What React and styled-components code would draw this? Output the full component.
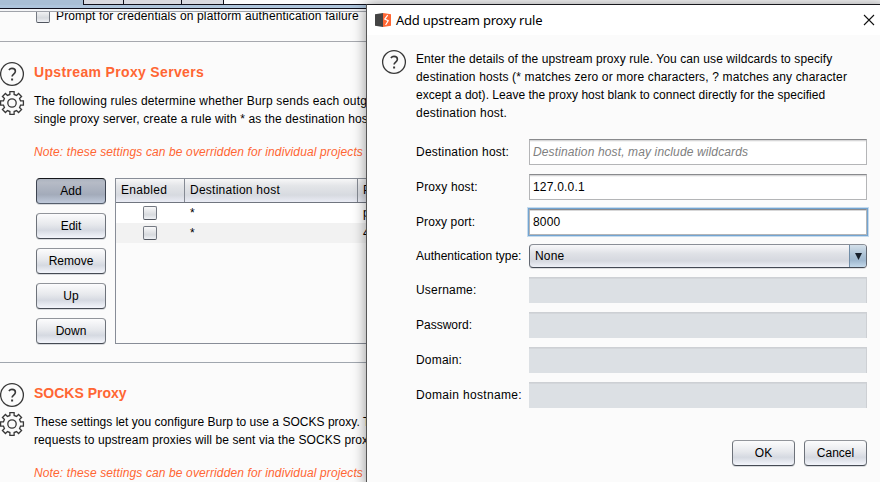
import React from "react";
import styled, { createGlobalStyle, css } from "styled-components";

const Global = createGlobalStyle`
  * { box-sizing: border-box; }
  html, body { margin: 0; padding: 0; overflow: hidden; }
  body { font-family: "Liberation Sans", Arial, sans-serif; font-size: 12px; color: #000; background: #fbfbfb; }
`;
const Screen = styled.div`
  position: relative; width: 880px; height: 482px; overflow: hidden; background: #fbfbfb;
`;
const TabStrip = styled.div`
  height: 12px; display: flex; flex-direction: column; background: #f4f5f7; border-bottom: 1px solid #a0a3aa;
`;
const Tabs = styled.div`
  height: 5px; display: flex; padding-left: 83px; background: #a9bfd5;
`;
const Tab = styled.div`
  width: ${(p) => p.$w}px; background: #d9dae1; border-left: 1px solid #10101c; border-bottom: 1px solid #10101c;
`;
const TabRest = styled(Tab)`flex: 1; background: #fcfcfd;`;
const TabLine = styled.div`
  height: 4px; background: #aec5dc; border-bottom: 1px solid #10101c;
`;
const Main = styled.main`display: flex; flex-direction: column;`;
const Top = styled.div`
  height: 30px; border-bottom: 1px solid #a6a8ae; display: flex; align-items: flex-start;
  padding-left: 36px; gap: 6px; overflow: hidden;
`;
const Check = styled.span`
  display: block; width: 14px; height: 14px; border-radius: 2px; border: 1px solid #747982; border-bottom-color: #50555e;
  background: linear-gradient(#f9f9fa, #d7dade 65%, #eff1f5); flex: none;
`;
const TopCheck = styled(Check)`margin-top: -3px;`;
const Line = styled.div`
  white-space: pre; height: 18px; line-height: 18px; letter-spacing: ${(p) => p.$ls || 0}px;
`;
const TopLine = styled(Line)`margin-top: -5px;`;
const Section = styled.section`
  display: flex; height: ${(p) => p.$h || "auto"}; border-bottom: 1px solid #a0a6ae; padding-top: ${(p) => p.$pt}px;
`;
const IconCol = styled.div`
  width: 34px; flex: none; display: flex; flex-direction: column; gap: 3px; margin-top: -2px;
  svg { display: block; margin-left: -1px; }
`;
const Body = styled.div`flex: 1; min-width: 0;`;
const Heading = styled.h2`
  margin: 0 0 11px; font-size: 14px; line-height: 18px; height: 18px; font-weight: bold; color: #ff6633; white-space: nowrap;
  letter-spacing: ${(p) => p.$ls}px;
`;
const Note = styled(Line)`margin-top: 15px; font-style: italic; color: #ff6633;`;
const Rules = styled.div`display: flex; margin: 17px 0 0 2px; gap: 9px;`;
const Buttons = styled.div`display: flex; flex-direction: column; gap: 9px;`;
const Button = styled.button`
  display: block; width: ${(p) => p.$w || 70}px; height: 26px; padding: 0 0 1px; font: inherit; line-height: 22px;
  color: #000; border: 1px solid #6d727a; border-top-color: #92959b; border-bottom-color: #454a53; border-radius: 4px;
  background: linear-gradient(#fcfcfd, #e6e8ec 45%, #d5d9e1 68%, #f3f5fb);
  box-shadow: 0 1px 0 #d8dadd;
  ${(p) => p.$pressed && css`
    border-color: #14161b #3c4350 #555e6c;
    background: linear-gradient(#adb4c0, #b6bbc6 15%, #a3abba 65%, #c0cadb);
  `}
`;
const Table = styled.div`
  flex: 1; height: 166px; border: 1px solid #888d97; display: flex; flex-direction: column;
`;
const cells = css`display: grid; grid-template-columns: 68px 173px 1fr;`;
const HeadRow = styled.div`
  ${cells} height: 24px; border-bottom: 1px solid #70757f;
  background: linear-gradient(#f7f7f8, #e3e5e8 30%, #d7dae0 70%, #eaecf5);
`;
const HeadCell = styled.div`
  padding-left: 5px; line-height: 22px; white-space: nowrap; letter-spacing: ${(p) => p.$ls || 0}px;
  & + & { border-left: 1px solid #858a94; }
`;
const Row = styled.div`${cells} height: 20px; background: ${(p) => (p.$alt ? "#f2f2f2" : "#fff")};`;
const Cell = styled.div`padding-left: 6px; line-height: 20px; overflow: hidden;`;
const CheckCell = styled.div`display: flex; align-items: center; justify-content: center;`;

const Dialog = styled.div`
  position: absolute; left: 366px; top: 4px; width: 520px; height: 484px; background: #fbfbfb;
  border: 1px solid #555; border-top-color: #18181c; box-shadow: 0 0 13px rgba(0,0,0,.42);
`;
const TitleBar = styled.div`
  width: 513px; height: 30px; background: #fff; display: flex; align-items: center; padding: 0 5px 1px 8px;
`;
const Title = styled.div`
  flex: 1; margin-left: 5px; font: 13px "Noto Sans", sans-serif; letter-spacing: -0.23px; line-height: 24px;
`;
const Intro = styled.div`display: flex; padding: 15px 0 0 14px; gap: 9px; svg { display: block; margin-top: -1px; }`;
const Form = styled.div`
  margin: 17px 0 0 49px; width: 451px; display: flex; flex-direction: column; gap: 9px;
`;
const Field = styled.div`display: grid; grid-template-columns: 113px 338px; height: ${(p) => p.$h || 26}px; align-items: center;`;
const Label = styled.label`white-space: nowrap; line-height: 22px; letter-spacing: ${(p) => p.$ls || 0}px;`;
const Input = styled.div`
  height: 26px; background: #fff; border: 1px solid #b4b5b7; border-top-color: #898a8d; padding-left: 3px; line-height: 25px;
  box-shadow: inset 0 1px 0 #d7d7d8, inset 0 2px 0 #f3f3f3; letter-spacing: ${(p) => p.$ls || 0}px; white-space: nowrap;
  ${(p) => p.$hint && css`color: #808080; font-style: italic;`}
  ${(p) => p.$focus && css`box-shadow: 0 0 0 1px #73a4d1, 0 0 0 2px #c5dbee, inset 0 1px 0 #d7d7d8;`}
  ${(p) => p.$off && css`background: #dce0e4; border: 0 solid #cdd0d4; border-width: 1px 1px 0 0; box-shadow: inset 0 1px 0 #d3d6da;`}
`;
const Select = styled.div`
  height: 24px; display: flex; border: 1px solid #626872; border-top-color: #8a8e96; border-bottom-color: #434953; border-radius: 4px;
  background: linear-gradient(#f8f8fa, #dfe1e6 40%, #d5d8df 72%, #eef0f7); overflow: hidden; box-shadow: 0 1px 0 #dcdde0;
`;
const SelectText = styled.span`flex: 1; padding-left: 5px; line-height: 22px; letter-spacing: ${(p) => p.$ls || 0}px;`;
const Arrow = styled.span`
  width: 17px; border-left: 1px solid #718da7; background: linear-gradient(#d4e0ea, #a8bfd3 50%, #9fb8cf 70%, #c3d8ea);
  display: flex; align-items: center; justify-content: center;
`;
const Actions = styled.div`margin: 32px 0 0 365px; display: flex; gap: 9px;`;

const Help = () => (
  <svg width="26" height="26" viewBox="0 0 26 26" fill="none" stroke="#383838" strokeWidth="1.3">
    <circle cx="13" cy="13" r="11.4" />
    <path d="M9.9 8.9C10.6 8 11.7 7.4 13 7.4c2.1 0 3.4 1.1 3.4 2.8 0 2.8-3.3 2.8-3.3 5.4" strokeWidth="1.6" />
    <path d="M12.1 17.5h2v2h-2z" fill="#383838" stroke="none" />
  </svg>
);
const Gear = () => {
  const pts = [];
  for (let i = 0; i < 8; i++) {
    [[-14, 8.8], [-10.5, 11.6], [10.5, 11.6], [14, 8.8]].forEach(([d, r]) => {
      const a = ((i * 45 + d) * Math.PI) / 180;
      pts.push(`${(13 + r * Math.sin(a)).toFixed(2)},${(13 - r * Math.cos(a)).toFixed(2)}`);
    });
  }
  return (
    <svg width="26" height="26" viewBox="0 0 26 26" fill="none" stroke="#383838" strokeWidth="1.3">
      <polygon points={pts.join(" ")} />
      <circle cx="13" cy="13" r="4.2" />
    </svg>
  );
};
const Logo = () => (
  <svg width="16" height="14" viewBox="0 0 16 14">
    <path d="M0 1.2L8 0v14l-8-1.2z" fill="#444" />
    <path d="M8 0l8 1.2v11.6L8 14z" fill="#ff6633" />
    <path d="M12.7 2.2L9.8 6.1l3.4 1.7-2.6 4.2" fill="none" stroke="#fff" strokeWidth="1.2" />
  </svg>
);
const Close = () => (
  <svg width="12" height="12" viewBox="0 0 12 12" stroke="#111" strokeWidth="1.1"><path d="M1 1l10 10M11 1L1 11" /></svg>
);

const NOTE = "Note: these settings can be overridden for individual projects";

export default function App() {
  return (
    <Screen>
      <Global />
      <TabStrip>
        <Tabs><Tab $w={40} /><Tab $w={58} /><Tab $w={42} /><TabRest /></Tabs>
        <TabLine />
      </TabStrip>
      <Main>
        <Top><TopCheck /><TopLine $ls={0.14}>Prompt for credentials on platform authentication failure</TopLine></Top>
        <Section $h="321px" $pt={21}>
          <IconCol><Help /><Gear /></IconCol>
          <Body>
            <Heading $ls={0.34}>Upstream Proxy Servers</Heading>
            <Line $ls={0.175}>The following rules determine whether Burp sends each outg</Line>
            <Line $ls={0.12}>single proxy server, create a rule with * as the destination hos</Line>
            <Note $ls={0.12}>{NOTE}</Note>
            <Rules>
              <Buttons>
                <Button $pressed>Add</Button><Button>Edit</Button><Button>Remove</Button><Button>Up</Button><Button>Down</Button>
              </Buttons>
              <Table>
                <HeadRow><HeadCell $ls={0.3}>Enabled</HeadCell><HeadCell $ls={0.25}>Destination host</HeadCell><HeadCell>P</HeadCell></HeadRow>
                <Row><CheckCell><Check /></CheckCell><Cell>*</Cell><Cell>p</Cell></Row>
                <Row $alt><CheckCell><Check /></CheckCell><Cell>*</Cell><Cell>4</Cell></Row>
              </Table>
            </Rules>
          </Body>
        </Section>
        <Section $pt={21}>
          <IconCol><Help /><Gear /></IconCol>
          <Body>
            <Heading $ls={0}>SOCKS Proxy</Heading>
            <Line $ls={0.02}>These settings let you configure Burp to use a SOCKS proxy. T</Line>
            <Line $ls={0.1}>requests to upstream proxies will be sent via the SOCKS prox</Line>
            <Note $ls={0.12}>{NOTE}</Note>
          </Body>
        </Section>
      </Main>
      <Dialog>
        <TitleBar><Logo /><Title>Add upstream proxy rule</Title><Close /></TitleBar>
        <Intro>
          <Help />
          <div>
            <Line $ls={0.095}>Enter the details of the upstream proxy rule. You can use wildcards to specify</Line>
            <Line $ls={0.15}>destination hosts (* matches zero or more characters, ? matches any character</Line>
            <Line $ls={0.02}>except a dot). Leave the proxy host blank to connect directly for the specified</Line>
            <Line $ls={0.22}>destination host.</Line>
          </div>
        </Intro>
        <Form>
          <Field><Label $ls={0.22}>Destination host:</Label><Input $hint $ls={0.13}>Destination host, may include wildcards</Input></Field>
          <Field><Label $ls={0.15}>Proxy host:</Label><Input $ls={0.2}>127.0.0.1</Input></Field>
          <Field><Label $ls={0.1}>Proxy port:</Label><Input $focus $ls={0.2}>8000</Input></Field>
          <Field $h={24}>
            <Label>Authentication type:</Label>
            <Select>
              <SelectText $ls={0.2}>None</SelectText>
              <Arrow><svg width="7" height="7" viewBox="0 0 7 7"><path d="M0 0h7L3.5 7z" fill="#17202b" /></svg></Arrow>
            </Select>
          </Field>
          <Field><Label $ls={0.2}>Username:</Label><Input $off /></Field>
          <Field><Label $ls={0}>Password:</Label><Input $off /></Field>
          <Field><Label $ls={0.2}>Domain:</Label><Input $off /></Field>
          <Field><Label $ls={0.33}>Domain hostname:</Label><Input $off /></Field>
        </Form>
        <Actions><Button $w={63}>OK</Button><Button $w={63}>Cancel</Button></Actions>
      </Dialog>
    </Screen>
  );
}
